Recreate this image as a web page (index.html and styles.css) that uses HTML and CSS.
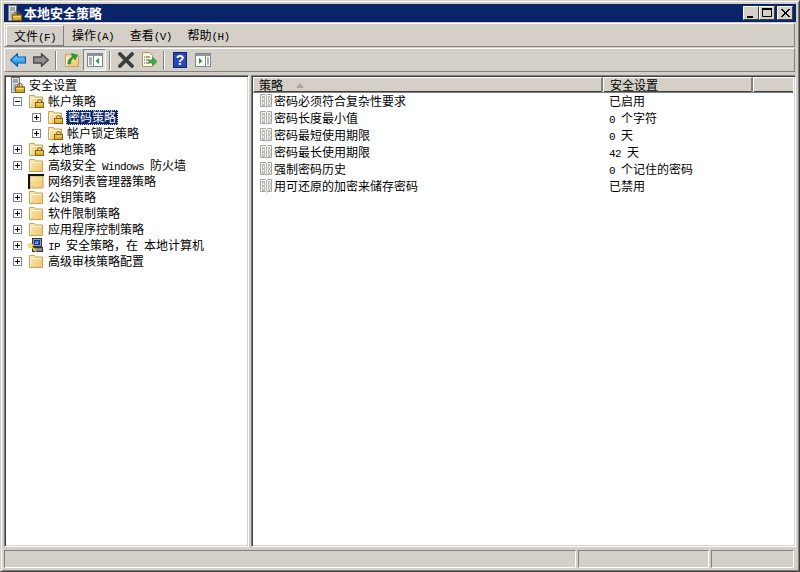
FILE: index.html
```html
<!DOCTYPE html>
<html lang="zh-CN">
<head>
<meta charset="utf-8">
<title>本地安全策略</title>
<link rel="stylesheet" href="styles.css">
</head>
<body>
<svg class="defs" width="0" height="0" aria-hidden="true">
  <defs>
    <linearGradient id="fy" x1="0" y1="0" x2="1" y2="1"><stop offset="0" stop-color="#fbe9ae"/><stop offset="1" stop-color="#efc76e"/></linearGradient>
    <linearGradient id="blue" x1="0" y1="0" x2="0" y2="1"><stop offset="0" stop-color="#7fd6ff"/><stop offset="1" stop-color="#0f86e0"/></linearGradient>
    <symbol id="lock" viewBox="0 0 9 9">
      <path d="M2.500 4V2.500a2 2 0 0 1 4 0V4" fill="none" stroke="#7d5f18" stroke-width="1"/>
      <rect x="0.500" y="3.500" width="8" height="5" fill="#e3ad28" stroke="#7d5f18"/>
      <path d="M1 5h7" stroke="#f8dc7a"/>
    </symbol>
    <symbol id="folder" viewBox="0 0 16 16">
      <path d="M1.500 14.500V2.500h5l1 1.500h7v10.500z" fill="url(#fy)" stroke="#c7a45a"/>
      <path d="M2.500 13.500V5.500h11" fill="none" stroke="#fff8dc"/>
    </symbol>
    <symbol id="folder-lock" viewBox="0 0 16 16">
      <use href="#folder" width="16" height="16"/>
      <use href="#lock" x="7" y="6" width="9" height="9"/>
    </symbol>
    <symbol id="folder-black" viewBox="0 0 16 16">
      <rect x="2" y="3" width="13" height="12" fill="url(#fy)" stroke="#c7a45a"/>
      <path d="M0 1h16v2H2v13H0z" fill="#111"/>
    </symbol>
    <symbol id="server-lock" viewBox="0 0 16 16">
      <rect x="1.500" y="0.500" width="8" height="15" fill="#dfe3e6" stroke="#6f7880"/>
      <path d="M3 3h5M3 5h5" stroke="#59636c"/>
      <rect x="3" y="7" width="5" height="7" fill="#aab2b8"/>
      <use href="#lock" x="5" y="6" width="10" height="10"/>
    </symbol>
    <symbol id="ip" viewBox="0 0 16 16">
      <rect x="4.500" y="1.500" width="9" height="8" fill="#9aa0b0" stroke="#333"/>
      <rect x="6" y="3" width="6" height="5" fill="#1b2f9c"/>
      <path d="M7 5h4M7 6.500h3" stroke="#6fd0ff"/>
      <rect x="4.500" y="10.500" width="10" height="4" fill="#8c8c8c" stroke="#333"/>
      <circle cx="2.500" cy="8.500" r="1.800" fill="none" stroke="#e8d820" stroke-width="1.400"/>
      <path d="M4 10l4 4M6 12l-1 1M8 14l-1 1" stroke="#e8d820" stroke-width="1.400"/>
    </symbol>
    <symbol id="policy" viewBox="0 0 16 16">
      <path d="M2.500 1.500h5l1 1 1-1h4v12h-4l-1 1-1-1h-5z" fill="#f4f4f1" stroke="#a4a49f"/>
      <path d="M8.500 2.500v11" stroke="#b4b4af"/>
      <path d="M4 4h3M4 6h1M6 6h1M4 8h3M4 10h1M6 10h1M4 12h3M10 4h2M10 6h1M12 6h1M10 8h2M10 10h1M12 10h1M10 12h2" stroke="#85857f"/>
    </symbol>
    <symbol id="arrow" viewBox="0 0 16 16">
      <path d="M0.700 8 7.500 1.700V5h8v6h-8v3.300z" stroke-linejoin="round"/>
    </symbol>
  </defs>
</svg>

<div class="window">
  <header class="titlebar">
    <svg class="icon16 title-icon"><use href="#server-lock"/></svg>
    <span class="title-text">本地安全策略</span>
    <div class="caption-buttons">
      <button class="cap" type="button" aria-label="最小化"><svg width="14" height="12"><path d="M3 9h6v2H3z" fill="#000"/></svg></button>
      <button class="cap" type="button" aria-label="最大化"><svg width="14" height="12"><path d="M2.500 1.500h9v8h-9z" fill="none" stroke="#000"/><path d="M2 2h10" stroke="#000" stroke-width="2"/></svg></button>
      <button class="cap cap-close" type="button" aria-label="关闭"><svg width="14" height="12"><path d="M3 2l8 8M4 2l8 8M11 2l-8 8M12 2l-8 8" stroke="#000" fill="none"/></svg></button>
    </div>
  </header>

  <nav class="band menubar">
    <span class="menu menu-open">文件<span class="lat">(F)</span></span>
    <span class="menu">操作<span class="lat">(A)</span></span>
    <span class="menu">查看<span class="lat">(V)</span></span>
    <span class="menu">帮助<span class="lat">(H)</span></span>
  </nav>

  <div class="band toolbar">
    <span class="tool"><svg class="icon16"><use href="#arrow" fill="url(#blue)" stroke="#0b5cb0" stroke-width="1.200"/></svg></span>
    <span class="tool"><svg class="icon16 flip"><use href="#arrow" fill="#8e8e8e" stroke="#4a4a4a" stroke-width="1.400"/></svg></span>
    <span class="sep"></span>
    <span class="tool"><svg class="icon16" viewBox="0 0 16 16"><use href="#folder" width="16" height="16"/><path d="M4 12C4 8 6 5.500 8.500 5L7.500 1.500l6 1.500-2.500 5-1-2.500C8 6.500 6.500 9 6.500 12z" fill="#2e9e3a" stroke="#17691f" stroke-width=".5"/></svg></span>
    <span class="tool tool-on"><svg class="icon16" viewBox="0 0 16 16"><rect x=".5" y="1.500" width="15" height="13" fill="#fff" stroke="#7b8894"/><path d="M1 2h14v2H1z" fill="#8b98a4"/><path d="M6.500 4v10" stroke="#7b8894"/><path d="M2 6h3M2 8h3M2 10h3M2 12h3" stroke="#56626e"/><path d="M12 6v6L8.500 9z" fill="#1f9a3a"/></svg></span>
    <span class="sep"></span>
    <span class="tool"><svg class="icon16" viewBox="0 0 16 16"><path d="M2 2l12 12M14 2L2 14" stroke="#3c3c3c" stroke-width="3.800" stroke-linecap="round"/></svg></span>
    <span class="tool"><svg class="icon16" viewBox="0 0 16 16"><path d="M1.500 .5h7l3 3v11h-10z" fill="#fdf8de" stroke="#a89a6a"/><path d="M3 5h1M5 5h4M3 8h1M5 8h3M3 11h1M5 11h3" stroke="#555"/><path d="M8 8h4V5.500L16 9.500l-4 4V11H8z" fill="#3cb043" stroke="#1c7d2a" stroke-width=".6"/></svg></span>
    <span class="sep"></span>
    <span class="tool"><svg class="icon16" viewBox="0 0 16 16"><rect x="1.500" y=".5" width="13" height="15" fill="#2648b8" stroke="#12246e"/><text class="help-mark" x="8" y="13">?</text></svg></span>
    <span class="tool"><svg class="icon16" viewBox="0 0 16 16"><rect x=".5" y="1.500" width="15" height="13" fill="#fff" stroke="#7b8894"/><path d="M1 2h14v2H1z" fill="#8b98a4"/><path d="M10.500 4v10" stroke="#7b8894"/><path d="M12 6h2M12 8h2M12 10h2M12 12h2" stroke="#56626e"/><path d="M4 6v6l3.500-3z" fill="#1f9a3a"/></svg></span>
  </div>

  <main class="panes">
    <section class="pane tree">
      <div class="row l0"><svg class="icon16"><use href="#server-lock"/></svg><span class="label">安全设置</span></div>
      <div class="row l1"><i class="exp minus"></i><svg class="icon16"><use href="#folder-lock"/></svg><span class="label">帐户策略</span></div>
      <div class="row l2"><i class="exp plus"></i><svg class="icon16"><use href="#folder-lock"/></svg><span class="label selected">密码策略</span></div>
      <div class="row l2"><i class="exp plus"></i><svg class="icon16"><use href="#folder-lock"/></svg><span class="label">帐户锁定策略</span></div>
      <div class="row l1"><i class="exp plus"></i><svg class="icon16"><use href="#folder-lock"/></svg><span class="label">本地策略</span></div>
      <div class="row l1"><i class="exp plus"></i><svg class="icon16"><use href="#folder"/></svg><span class="label">高级安全<span class="lat"> Windows </span>防火墙</span></div>
      <div class="row l1"><i class="exp none"></i><svg class="icon16"><use href="#folder-black"/></svg><span class="label">网络列表管理器策略</span></div>
      <div class="row l1"><i class="exp plus"></i><svg class="icon16"><use href="#folder"/></svg><span class="label">公钥策略</span></div>
      <div class="row l1"><i class="exp plus"></i><svg class="icon16"><use href="#folder"/></svg><span class="label">软件限制策略</span></div>
      <div class="row l1"><i class="exp plus"></i><svg class="icon16"><use href="#folder"/></svg><span class="label">应用程序控制策略</span></div>
      <div class="row l1"><i class="exp plus"></i><svg class="icon16"><use href="#ip"/></svg><span class="label"><span class="lat">IP </span>安全策略，在<span class="lat"> </span>本地计算机</span></div>
      <div class="row l1"><i class="exp plus"></i><svg class="icon16"><use href="#folder"/></svg><span class="label">高级审核策略配置</span></div>
    </section>

    <section class="pane list">
      <div class="list-head">
        <div class="th th-name">策略<i class="sort"></i></div>
        <div class="th">安全设置</div>
        <div class="th"></div>
      </div>
      <div class="item"><div class="cell-name"><svg class="icon16"><use href="#policy"/></svg><span class="label">密码必须符合复杂性要求</span></div><div class="cell-val">已启用</div></div>
      <div class="item"><div class="cell-name"><svg class="icon16"><use href="#policy"/></svg><span class="label">密码长度最小值</span></div><div class="cell-val"><span class="lat">0 </span>个字符</div></div>
      <div class="item"><div class="cell-name"><svg class="icon16"><use href="#policy"/></svg><span class="label">密码最短使用期限</span></div><div class="cell-val"><span class="lat">0 </span>天</div></div>
      <div class="item"><div class="cell-name"><svg class="icon16"><use href="#policy"/></svg><span class="label">密码最长使用期限</span></div><div class="cell-val"><span class="lat">42 </span>天</div></div>
      <div class="item"><div class="cell-name"><svg class="icon16"><use href="#policy"/></svg><span class="label">强制密码历史</span></div><div class="cell-val"><span class="lat">0 </span>个记住的密码</div></div>
      <div class="item"><div class="cell-name"><svg class="icon16"><use href="#policy"/></svg><span class="label">用可还原的加密来储存密码</span></div><div class="cell-val">已禁用</div></div>
    </section>
  </main>

  <footer class="status">
    <div class="st st-main"></div>
    <div class="st st-mid"></div>
    <div class="st st-end"></div>
  </footer>
</div>
</body>
</html>
```
FILE: styles.css
```css
* { box-sizing: border-box; }
html, body { margin: 0; padding: 0; }
body {
  font-family: "Noto Sans CJK SC", "Liberation Sans", sans-serif;
  font-size: 12px;
  line-height: 16px;
  color: #000;
  background: #d4d0c8;
  overflow: hidden;
}
.defs { position: absolute; }
.lat {
  font-family: "Liberation Mono", monospace;
  font-size: 11px;
  line-height: 1;
  letter-spacing: -0.6px;
  white-space: pre;
}
.icon16 { width: 16px; height: 16px; flex: none; display: block; }

.window {
  width: 800px;
  height: 572px;
  display: flex;
  flex-direction: column;
  padding: 3px;
  border: 1px solid;
  border-color: #d4d0c8 #404040 #404040 #d4d0c8;
  box-shadow: inset 1px 1px 0 #fff, inset -1px -1px 0 #808080;
}

.titlebar {
  height: 18px;
  flex: none;
  background: #0a246a;
  display: flex;
  align-items: center;
  padding: 0 3px;
  color: #fff;
}
.title-icon { margin-right: 1px; }
.title-text { font-size: 13px; font-weight: bold; line-height: 18px; }
.caption-buttons { margin-left: auto; display: flex; }
.cap {
  width: 16px;
  height: 14px;
  padding: 0;
  margin: 0;
  border: 1px solid;
  border-color: #fff #404040 #404040 #fff;
  background: #d4d0c8;
  display: block;
}
.cap svg { display: block; }
.cap-close { margin-left: 2px; }

.band {
  height: 24px;
  flex: none;
  margin-top: 1px;
  margin-right: 1px;
  border: 1px solid;
  border-color: #fff #808080 #808080 #fff;
  display: flex;
  align-items: center;
}
.menubar { padding-left: 1px; }
.menu { height: 22px; line-height: 21px; padding: 0 7.7px 0 8px; display: block; }
.menu-open {
  border: 1px solid;
  border-color: #fff #808080 #808080 #fff;
  padding: 0 7px;
  line-height: 19px;
  height: 21px;
}

.toolbar { padding-left: 1px; }
.tool {
  width: 23px;
  height: 22px;
  display: flex;
  align-items: center;
  justify-content: center;
  flex: none;
}
.tool-on {
  border: 1px solid;
  border-color: #808080 #fff #fff #808080;
  background: #e6e3de;
}
.flip { transform: scaleX(-1); }
.sep {
  width: 2px;
  height: 19px;
  margin: 0 3px;
  flex: none;
  background: #808080;
  border-right: 1px solid #fff;
}
.help-mark {
  font-family: "Liberation Sans", sans-serif;
  font-size: 14px;
  font-weight: bold;
  fill: #fff;
  text-anchor: middle;
}

.panes {
  flex: 1;
  min-height: 0;
  margin-top: 3px;
  display: flex;
  gap: 2px;
}
.pane {
  background: #fff;
  border: 1px solid;
  border-color: #808080 #fff #fff #808080;
  box-shadow: inset 1px 1px 0 #404040, inset -1px -1px 0 #d4d0c8;
}
.tree { width: 245px; flex: none; padding: 1px 2px 2px 1px; }
.list { flex: 1; padding: 1px 2px 2px 1px; }

.row { height: 16px; display: flex; align-items: center; white-space: nowrap; }
.l0 { padding-left: 4px; }
.l1 { padding-left: 7px; }
.l2 { padding-left: 26px; }
.l0 .label { margin-left: 3px; }
.exp {
  width: 9px;
  height: 9px;
  flex: none;
  margin-right: 6px;
  border: 1px solid #808080;
  background: #fff;
  position: relative;
}
.exp.none { border: 0; background: none; }
.minus::before, .plus::before {
  content: "";
  position: absolute;
  left: 1px;
  top: 3px;
  width: 5px;
  height: 1px;
  background: #000;
}
.plus::after {
  content: "";
  position: absolute;
  left: 3px;
  top: 1px;
  width: 1px;
  height: 5px;
  background: #000;
}
.label { margin-left: 4px; line-height: 16px; }
.selected {
  margin-left: 3px;
  padding: 0 2px;
  height: 15px;
  line-height: 14px;
  background: #0a246a;
  color: #fff;
  outline: 1px dotted #d4d0c8;
  outline-offset: -1px;
}

.list-head {
  display: grid;
  grid-template-columns: 350px 150px 1fr;
  height: 15px;
  background: #d4d0c8;
  border-bottom: 1px solid #404040;
  box-shadow: 0 1px 0 #808080;
}
.th {
  padding-left: 5px;
  line-height: 14px;
  border-top: 1px solid #fff;
  border-left: 1px solid #fff;
  border-right: 2px solid #808080;
  white-space: nowrap;
  display: flex;
  align-items: center;
}
.th:last-child { border-right: 0; }
.th + .th { padding-left: 6px; }
.sort {
  margin-left: 13px;
  width: 0;
  height: 0;
  border-left: 4px solid transparent;
  border-right: 4px solid transparent;
  border-bottom: 5px solid #a8a59e;
}

.item {
  display: grid;
  grid-template-columns: 350px 1fr;
  height: 17px;
  padding-top: 1px;
  align-items: start;
  white-space: nowrap;
}
.cell-name { display: flex; align-items: center; padding-left: 5px; height: 16px; }
.cell-name .label { margin-left: 0; }
.cell-val { padding-left: 6px; height: 16px; line-height: 16px; }

.status {
  height: 18px;
  flex: none;
  margin-top: 3px;
  margin-right: 2px;
  display: flex;
  gap: 2px;
}
.st {
  height: 18px;
  border: 1px solid;
  border-color: #808080 #fff #fff #808080;
}
.st-main { width: 572px; }
.st-mid { width: 131px; }
.st-end { flex: 1; }
```
